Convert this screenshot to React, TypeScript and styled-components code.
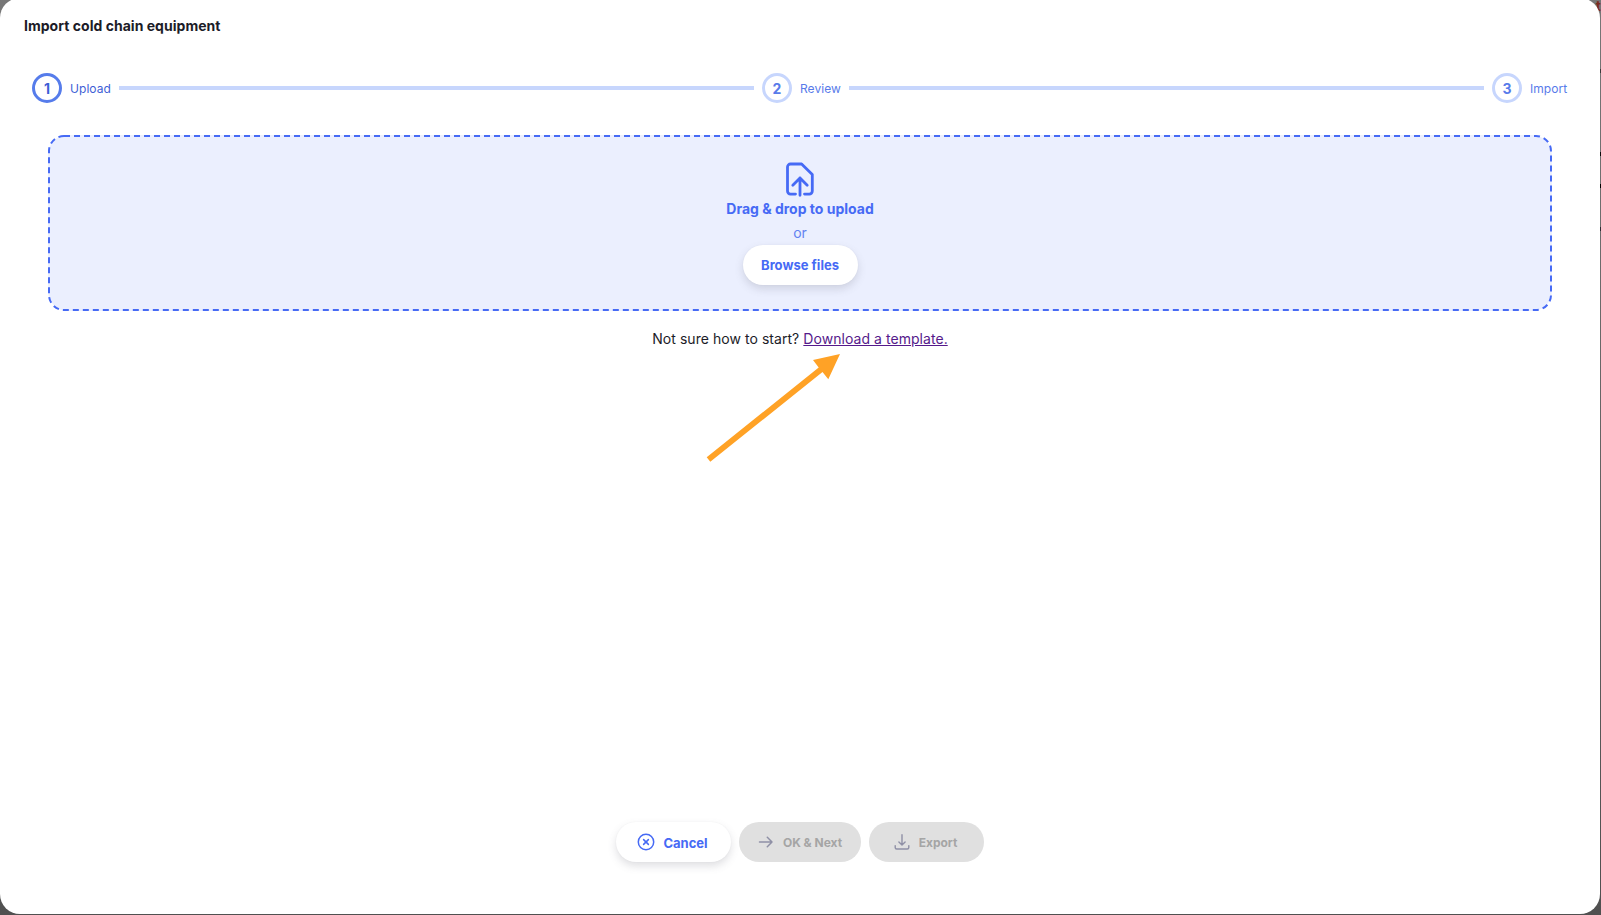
import React from 'react';
import styled, { createGlobalStyle } from 'styled-components';

const GlobalStyle = createGlobalStyle`
  *, *::before, *::after { box-sizing: border-box; }
  html, body { margin: 0; height: 100%; }
  body {
    background: #606060;
    color: #1c1c28;
    font-family: Inter, "Liberation Sans", sans-serif;
    overflow: hidden;
  }
`;

const Backdrop = styled.div`
  height: 915px;
  padding-right: 1px;
  position: relative;
  overflow: hidden;
  background: linear-gradient(#777, #505050);
`;

const BehindText = styled.span`
  position: absolute;
  right: 0;
  top: -2px;
  font-size: 14px;
  line-height: 16px;
  font-weight: 700;
  color: #7c2c20;
`;

const BehindMark = styled.span<{ $top: number; $color: string }>`
  position: absolute;
  right: 0;
  top: ${p => p.$top}px;
  width: 1px;
  height: 4px;
  background: ${p => p.$color};
`;

const Modal = styled.section`
  position: relative;
  height: 916px;
  margin-top: -2px;
  border-radius: 20px;
  background: #fff;
  display: flex;
  flex-direction: column;
`;

const Title = styled.h1`
  margin: 0;
  padding: 18px 24px 0;
  height: 75px;
  font-size: 14px;
  line-height: 20px;
  font-weight: 700;
  letter-spacing: 0.03px;
`;

const Stepper = styled.ol`
  margin: 0;
  padding: 0 32px;
  height: 30px;
  list-style: none;
  display: flex;
  align-items: center;
  gap: 8px;
`;

const Step = styled.li<{ $active?: boolean }>`
  display: flex;
  align-items: center;
  gap: 8px;
  color: ${p => (p.$active ? '#3f5fd6' : '#587bea')};
`;

const StepCircle = styled.span<{ $active?: boolean }>`
  width: 30px;
  height: 30px;
  border: 3px solid ${p => (p.$active ? '#567ceb' : '#c7d6fd')};
  border-radius: 50%;
  display: flex;
  align-items: center;
  justify-content: center;
  font-size: 14px;
  font-weight: 700;
`;

const StepLabel = styled.span<{ $width: number }>`
  width: ${p => p.$width}px;
  padding-top: 1px;
  font-size: 12px;
  line-height: 18px;
  letter-spacing: 0.06px;
  white-space: nowrap;
`;

const Connector = styled.li`
  flex: 1;
  height: 4px;
  background: #c7d6fd;
`;

const DropZone = styled.div`
  position: relative;
  height: 176px;
  margin: 32px 48px 0;
  padding-top: 27px;
  border-radius: 20px;
  background: #ebeffe;
  color: #466af5;
  display: flex;
  flex-direction: column;
  align-items: center;
`;

const DashedOutline = styled.svg`
  position: absolute;
  inset: 0;
  width: 100%;
  height: 100%;
`;

const DropHeading = styled.strong`
  margin-top: -1px;
  font-size: 14px;
  line-height: 24px;
  font-weight: 700;
`;

const DropOr = styled.span`
  font-size: 14px;
  line-height: 24px;
  color: #6282f1;
`;

const Pill = styled.button<{ $width: number; $gap?: number; $shift?: number }>`
  width: ${p => p.$width}px;
  height: 40px;
  padding: 0 ${p => p.$shift ?? 0}px 0 0;
  border: 0;
  border-radius: 20px;
  background: #fff;
  color: #466af5;
  box-shadow: 0 4px 8px rgba(96, 97, 112, 0.2), 0 0 2px rgba(40, 41, 61, 0.04);
  display: flex;
  align-items: center;
  justify-content: center;
  gap: ${p => p.$gap ?? 0}px;
  font: 700 13px/20px Inter, "Liberation Sans", sans-serif;

  &:disabled {
    background: #e0e0e0;
    color: #a5a5a5;
    box-shadow: none;
    font-size: 12px;
  }
  &:disabled svg { color: #8f90a6; }
`;

const PillLabel = styled.span`
  padding-top: 1px;
`;

const Hint = styled.p`
  margin: 18px 0 0;
  text-align: center;
  font-size: 14px;
  line-height: 20px;
  letter-spacing: 0.05px;
`;

const TemplateLink = styled.a`
  color: #551a8b;
  text-decoration: underline;
`;

const Pointer = styled.svg`
  position: absolute;
  left: 700px;
  top: 350px;
`;

const Footer = styled.footer`
  margin-top: auto;
  padding-bottom: 52px;
  display: flex;
  justify-content: center;
  gap: 8px;
`;

const FileUploadIcon = () => (
  <svg width="28" height="36" viewBox="0 0 28 36" fill="none" stroke="currentColor" strokeWidth="2.8" strokeLinecap="round" strokeLinejoin="round">
    <path d="M9.5 32.1H4.5a3 3 0 0 1-3-3V5a3 3 0 0 1 3-3H15.6L26.3 12.5V29.1a3 3 0 0 1-3 3H18.5" />
    <path d="M14 33.3V16M6.8 23.2 14 16 21.2 23.2" />
  </svg>
);

const CancelIcon = () => (
  <svg width="18" height="18" viewBox="0 0 18 18" fill="none" stroke="currentColor" strokeWidth="1.5" strokeLinecap="round">
    <circle cx="9" cy="9" r="7.7" />
    <path d="m6.6 6.6 4.8 4.8m0-4.8-4.8 4.8" />
  </svg>
);

const ArrowIcon = () => (
  <svg width="16" height="16" viewBox="0 0 16 16" fill="none" stroke="currentColor" strokeWidth="1.5" strokeLinecap="round" strokeLinejoin="round">
    <path d="M1.5 8H14M9.3 3.3 14 8l-4.7 4.7" />
  </svg>
);

const ExportIcon = () => (
  <svg width="16" height="16" viewBox="0 0 16 16" fill="none" stroke="currentColor" strokeWidth="1.4" strokeLinecap="round" strokeLinejoin="round">
    <path d="M8 .7v10.2M4.9 7.9 8 10.9l3.1-3M1.2 11.6v1.9a1.5 1.5 0 0 0 1.5 1.5h10.6a1.5 1.5 0 0 0 1.5-1.5v-1.9" />
  </svg>
);

export default function App() {
  return (
    <>
      <GlobalStyle />
      <Backdrop>
        <BehindText>t</BehindText>
        <BehindMark $top={69} $color="#3a3a3a" />
        <BehindMark $top={152} $color="#0c0c0c" />
        <BehindMark $top={184} $color="#000" />
        <BehindMark $top={227} $color="#2c2c34" />
        <Modal>
          <Title>Import cold chain equipment</Title>
          <Stepper>
            <Step $active>
              <StepCircle $active>1</StepCircle>
              <StepLabel $width={41}>Upload</StepLabel>
            </Step>
            <Connector />
            <Step>
              <StepCircle>2</StepCircle>
              <StepLabel $width={41}>Review</StepLabel>
            </Step>
            <Connector />
            <Step>
              <StepCircle>3</StepCircle>
              <StepLabel $width={38}>Import</StepLabel>
            </Step>
          </Stepper>
          <DropZone>
            <DashedOutline fill="none" stroke="#466af5" strokeWidth="2">
              <path
                d="M16 1H1488A15 15 0 0 1 1503 16V160A15 15 0 0 1 1488 175H16A15 15 0 0 1 1 160V16A15 15 0 0 1 16 1Z"
                strokeDasharray="6 4"
              />
            </DashedOutline>
            <FileUploadIcon />
            <DropHeading>Drag &amp; drop to upload</DropHeading>
            <DropOr>or</DropOr>
            <Pill $width={115}>Browse files</Pill>
          </DropZone>
          <Hint>
            Not sure how to start? <TemplateLink>Download a template.</TemplateLink>
          </Hint>
          <Footer>
            <Pill $width={115} $gap={8} $shift={2}><CancelIcon /><PillLabel>Cancel</PillLabel></Pill>
            <Pill $width={122} $gap={9} disabled><ArrowIcon /><PillLabel>OK &amp; Next</PillLabel></Pill>
            <Pill $width={115} $gap={9} $shift={2} disabled><ExportIcon /><PillLabel>Export</PillLabel></Pill>
          </Footer>
          <Pointer width="150" height="120" viewBox="700 348 150 120" fill="#ffa226">
            <path d="M706.7 457.3 818.7 367.5 813 360 840 354 828.3 379.3 822.5 372 710.3 461.8Z" />
          </Pointer>
        </Modal>
      </Backdrop>
    </>
  );
}
